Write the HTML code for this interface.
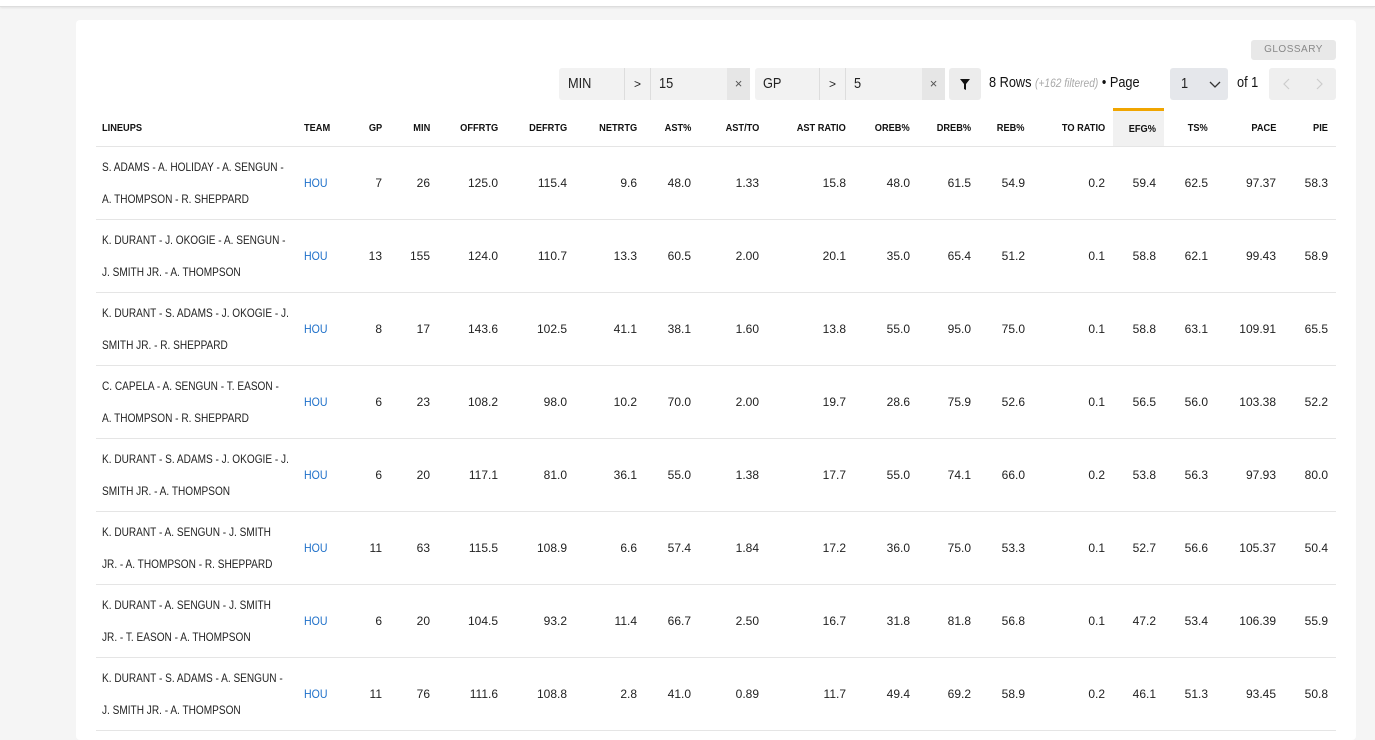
<!DOCTYPE html>
<html><head><meta charset="utf-8">
<style>
*{box-sizing:border-box;margin:0;padding:0}
body{width:1375px;height:728px;overflow:hidden;background:#f5f5f5;font-family:"Liberation Sans Narrow","Liberation Sans",sans-serif;color:#111;position:relative}
.top{position:absolute;left:0;top:0;width:1375px;height:7px;background:#fff;border-bottom:1px solid #ddd;box-shadow:0 1px 2px rgba(0,0,0,.08)}
.card{position:absolute;left:76px;top:20px;width:1280px;height:720px;background:#fff;border-radius:4px}
.abs{position:absolute}
.gl{left:1251px;top:40px;width:85px;height:20px;background:#e8e8e8;border-radius:3px;color:#888;font-size:10px;letter-spacing:.5px;text-align:center;line-height:20px}
.fb{top:68px;height:32px;background:#f2f2f2;border-radius:3px;font-size:15px;color:#222}
.fb span{position:absolute;top:0;height:32px;line-height:32px}
.sep{border-left:1px solid #ddd}
.x{background:#e6e6e6;text-align:center;color:#555;font-size:13px}
.n{display:inline-block;transform:scaleX(.85);transform-origin:left center;white-space:nowrap}
table{position:absolute;left:96px;top:108px;border-collapse:collapse;table-layout:fixed;width:1240px}
th{height:37px;font-size:10.5px;font-weight:bold;text-align:right;padding-right:8px;border-bottom:1px solid #e5e5e5;white-space:nowrap}
td{height:73px;font-size:12px;text-align:right;padding-right:8px;border-bottom:1px solid #e5e5e5;color:#222;white-space:nowrap}
th:first-child,td:first-child{text-align:left;padding-left:6px}
th:nth-child(2),td:nth-child(2){text-align:left;padding-left:8px}
td:first-child{line-height:32px;overflow:visible}
td:nth-child(2){color:#1d6fc9}
th.e{background:#f1f1f1;border-top:3px solid #f0a500}
.c{display:inline-block;transform:scaleX(.88);transform-origin:right center;white-space:nowrap}
td:first-child .c,th:first-child .c,td:nth-child(2) .c,th:nth-child(2) .c{transform-origin:left center}
td:first-child .c{transform:scaleX(.84)}
</style></head><body>
<div class="top"></div>
<div class="card"></div>
<div class="abs gl">GLOSSARY</div>
<div class="abs fb" style="left:559px;width:191px">
<span style="left:9px"><span class="n">MIN</span></span>
<span class="sep" style="left:65px;width:26px;text-align:center;font-size:12px">&gt;</span>
<span class="sep" style="left:91px;padding-left:8px"><span class="n">15</span></span>
<span class="x" style="left:168px;width:23px">×</span>
</div>
<div class="abs fb" style="left:755px;width:190px">
<span style="left:8px"><span class="n">GP</span></span>
<span class="sep" style="left:64px;width:26px;text-align:center;font-size:12px">&gt;</span>
<span class="sep" style="left:90px;padding-left:8px"><span class="n">5</span></span>
<span class="x" style="left:167px;width:23px">×</span>
</div>
<div class="abs fb" style="left:949px;width:32px;background:#ececec"><svg style="position:absolute;left:11px;top:11px" width="10" height="11" viewBox="0 0 10 11"><path d="M0 0H10L6 5V11L4 10V5Z" fill="#111"/></svg></div>
<div class="abs" style="left:989px;top:74px;font-size:15px;white-space:nowrap"><span class="n">8 Rows <i style="color:#aaa;font-size:12px">(+162 filtered)</i> • Page</span></div>
<div class="abs fb" style="left:1170px;width:58px;background:#e5e7eb"><span style="left:11px"><span class="n">1</span></span><svg style="position:absolute;left:39px;top:13px" width="12" height="7" viewBox="0 0 12 7"><path d="M1 1L6 6L11 1" stroke="#333" stroke-width="1.3" fill="none"/></svg></div>
<div class="abs" style="left:1237px;top:74px;font-size:15px"><span class="n">of 1</span></div>
<div class="abs fb" style="left:1269px;width:67px;background:#efefef"><svg style="position:absolute;left:14px;top:10px" width="8" height="12" viewBox="0 0 8 12"><path d="M6 1L1 6L6 11" stroke="#ccc" stroke-width="1.2" fill="none"/></svg><svg style="position:absolute;left:46px;top:10px" width="8" height="12" viewBox="0 0 8 12"><path d="M2 1L7 6L2 11" stroke="#ccc" stroke-width="1.2" fill="none"/></svg></div>
<table>
<colgroup><col style="width:200px"><col style="width:64px"><col style="width:30px"><col style="width:48px"><col style="width:68px"><col style="width:69px"><col style="width:70px"><col style="width:54px"><col style="width:68px"><col style="width:87px"><col style="width:64px"><col style="width:61px"><col style="width:54px"><col style="width:80px"><col style="width:51px"><col style="width:52px"><col style="width:68px"><col style="width:52px"></colgroup>
<tr><th><span class="c">LINEUPS</span></th><th><span class="c">TEAM</span></th><th><span class="c">GP</span></th><th><span class="c">MIN</span></th><th><span class="c">OFFRTG</span></th><th><span class="c">DEFRTG</span></th><th><span class="c">NETRTG</span></th><th><span class="c">AST%</span></th><th><span class="c">AST/TO</span></th><th><span class="c">AST RATIO</span></th><th><span class="c">OREB%</span></th><th><span class="c">DREB%</span></th><th><span class="c">REB%</span></th><th><span class="c">TO RATIO</span></th><th class="e"><span class="c">EFG%</span></th><th><span class="c">TS%</span></th><th><span class="c">PACE</span></th><th><span class="c">PIE</span></th></tr>
<tr><td><span class="c">S. ADAMS - A. HOLIDAY - A. SENGUN -<br>A. THOMPSON - R. SHEPPARD</span></td><td><span class="c">HOU</span></td><td>7</td><td>26</td><td>125.0</td><td>115.4</td><td>9.6</td><td>48.0</td><td>1.33</td><td>15.8</td><td>48.0</td><td>61.5</td><td>54.9</td><td>0.2</td><td>59.4</td><td>62.5</td><td>97.37</td><td>58.3</td></tr>
<tr><td><span class="c">K. DURANT - J. OKOGIE - A. SENGUN -<br>J. SMITH JR. - A. THOMPSON</span></td><td><span class="c">HOU</span></td><td>13</td><td>155</td><td>124.0</td><td>110.7</td><td>13.3</td><td>60.5</td><td>2.00</td><td>20.1</td><td>35.0</td><td>65.4</td><td>51.2</td><td>0.1</td><td>58.8</td><td>62.1</td><td>99.43</td><td>58.9</td></tr>
<tr><td><span class="c">K. DURANT - S. ADAMS - J. OKOGIE - J.<br>SMITH JR. - R. SHEPPARD</span></td><td><span class="c">HOU</span></td><td>8</td><td>17</td><td>143.6</td><td>102.5</td><td>41.1</td><td>38.1</td><td>1.60</td><td>13.8</td><td>55.0</td><td>95.0</td><td>75.0</td><td>0.1</td><td>58.8</td><td>63.1</td><td>109.91</td><td>65.5</td></tr>
<tr><td><span class="c">C. CAPELA - A. SENGUN - T. EASON -<br>A. THOMPSON - R. SHEPPARD</span></td><td><span class="c">HOU</span></td><td>6</td><td>23</td><td>108.2</td><td>98.0</td><td>10.2</td><td>70.0</td><td>2.00</td><td>19.7</td><td>28.6</td><td>75.9</td><td>52.6</td><td>0.1</td><td>56.5</td><td>56.0</td><td>103.38</td><td>52.2</td></tr>
<tr><td><span class="c">K. DURANT - S. ADAMS - J. OKOGIE - J.<br>SMITH JR. - A. THOMPSON</span></td><td><span class="c">HOU</span></td><td>6</td><td>20</td><td>117.1</td><td>81.0</td><td>36.1</td><td>55.0</td><td>1.38</td><td>17.7</td><td>55.0</td><td>74.1</td><td>66.0</td><td>0.2</td><td>53.8</td><td>56.3</td><td>97.93</td><td>80.0</td></tr>
<tr><td><span class="c">K. DURANT - A. SENGUN - J. SMITH<br>JR. - A. THOMPSON - R. SHEPPARD</span></td><td><span class="c">HOU</span></td><td>11</td><td>63</td><td>115.5</td><td>108.9</td><td>6.6</td><td>57.4</td><td>1.84</td><td>17.2</td><td>36.0</td><td>75.0</td><td>53.3</td><td>0.1</td><td>52.7</td><td>56.6</td><td>105.37</td><td>50.4</td></tr>
<tr><td><span class="c">K. DURANT - A. SENGUN - J. SMITH<br>JR. - T. EASON - A. THOMPSON</span></td><td><span class="c">HOU</span></td><td>6</td><td>20</td><td>104.5</td><td>93.2</td><td>11.4</td><td>66.7</td><td>2.50</td><td>16.7</td><td>31.8</td><td>81.8</td><td>56.8</td><td>0.1</td><td>47.2</td><td>53.4</td><td>106.39</td><td>55.9</td></tr>
<tr><td><span class="c">K. DURANT - S. ADAMS - A. SENGUN -<br>J. SMITH JR. - A. THOMPSON</span></td><td><span class="c">HOU</span></td><td>11</td><td>76</td><td>111.6</td><td>108.8</td><td>2.8</td><td>41.0</td><td>0.89</td><td>11.7</td><td>49.4</td><td>69.2</td><td>58.9</td><td>0.2</td><td>46.1</td><td>51.3</td><td>93.45</td><td>50.8</td></tr>
</table>
</body></html>
